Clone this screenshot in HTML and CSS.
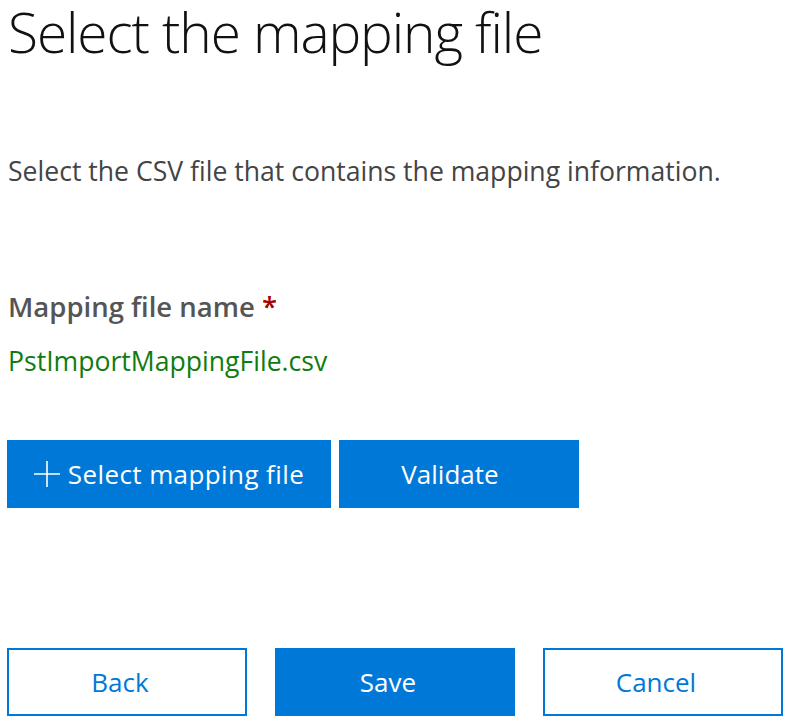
FILE: index.html
```html
<!DOCTYPE html>
<html>
<head>
<meta charset="utf-8">
<link rel="stylesheet" href="styles.css">
</head>
<body>
<div class="page">
  <h1 class="title">Select the mapping file</h1>
  <p class="desc">Select the CSV file that contains the mapping information.</p>
  <div class="field">
    <div class="label">Mapping file name <span class="req">*</span></div>
    <div class="value">PstImportMappingFile.csv</div>
  </div>
  <div class="actions">
    <button class="btn primary select"><svg class="plus" width="26" height="26" viewBox="0 0 26 26"><path d="M13 0V26M0 13H26" stroke="#fff" stroke-width="1.6" fill="none"/></svg><span class="select-text">Select mapping file</span></button>
    <button class="btn primary validate">Validate</button>
  </div>
  <div class="footer">
    <button class="btn outline">Back</button>
    <button class="btn primary">Save</button>
    <button class="btn outline">Cancel</button>
  </div>
</div>
</body>
</html>
```
FILE: styles.css
```css
html, body {
  margin: 0;
  padding: 0;
  background: #fff;
}
.page {
  font-family: "Open Sans", "Noto Sans", sans-serif;
  padding: 0 0 0 8px;
  width: 802px;
  height: 724px;
  box-sizing: border-box;
}
.title {
  margin: 0;
  font-weight: 300;
  font-size: 55px;
  line-height: 64px;
  color: #111;
  letter-spacing: -1.1px;
}
.desc {
  margin: 91px 0 0 0;
  font-size: 26.6px;
  line-height: 32px;
  color: #444;
}
.field {
  margin-top: 104px;
}
.label {
  font-size: 27.5px;
  font-weight: 600;
  color: #555;
  line-height: 32px;
}
.req {
  color: #a80000;
}
.value {
  margin-top: 22px;
  font-size: 26.6px;
  line-height: 32px;
  color: #107c10;
}
.actions {
  display: flex;
  gap: 8px;
  margin-top: 63px;
  margin-left: -1px;
}
.btn {
  font-family: "Open Sans", "Noto Sans", sans-serif;
  font-size: 26px;
  height: 68px;
  border: 2px solid #0078d7;
  box-sizing: border-box;
  padding: 0;
  display: flex;
  align-items: center;
  justify-content: center;
}
.primary {
  background: #0078d7;
  color: #fff;
}
.outline {
  background: #fff;
  color: #0078d7;
}
.select {
  width: 324px;
  gap: 8px;
}
.select-text {
  letter-spacing: 0.4px;
}
.plus {
  display: block;
}
.validate {
  width: 240px;
  padding-right: 18px;
}
.footer {
  display: flex;
  gap: 28px;
  margin-top: 140px;
  margin-left: -1px;
}
.footer .btn {
  width: 240px;
  padding-right: 14px;
}
```
